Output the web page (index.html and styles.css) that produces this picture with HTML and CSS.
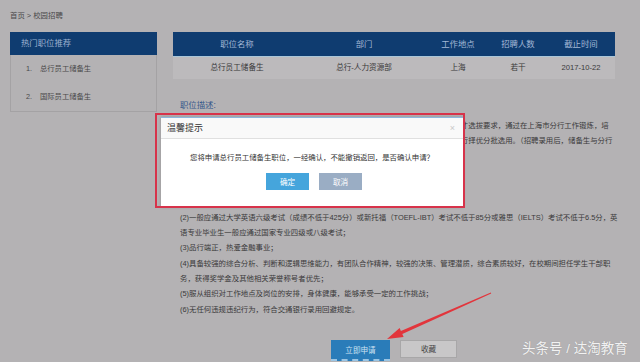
FILE: index.html
```html
<!DOCTYPE html>
<html lang="zh-CN">
<head>
<meta charset="utf-8">
<title>校园招聘</title>
<link rel="stylesheet" href="styles.css">
</head>
<body>
<div class="page">
  <div class="crumb">首页 &gt; 校园招聘</div>
  <div class="main">
    <aside class="side">
      <div class="side-hd">热门职位推荐</div>
      <ul class="side-list">
        <li><span class="num">1.</span>总行员工储备生</li>
        <li><span class="num">2.</span>国际员工储备生</li>
      </ul>
    </aside>
    <section class="content">
      <div class="table">
        <div class="thead">
          <span>职位名称</span><span>部门</span><span>工作地点</span><span>招聘人数</span><span>截止时间</span>
        </div>
        <div class="trow">
          <span>总行员工储备生</span><span>总行-人力资源部</span><span>上海</span><span>若干</span><span>2017-10-22</span>
        </div>
      </div>
      <div class="desc-title">职位描述:</div>
      <div class="desc">
        <p>交通银行总行员工储备生项目旨在为总行及境内外分行储备优秀青年人才，按照总行人才选拔要求，通过在上海市分行工作锻炼，培<br>养期满后经考核合格，由总行根据各部门业务发展需要及个人综合表现和意愿情况，进行择优分批选用。（招聘录用后，储备生与分行<br>签订劳动合同。）</p>
        <p>工作地点：上海</p>
        <p>任职资格：</p>
        <p>(1)2018年应届硕士及以上学历；</p>
        <p>(2)一般应通过大学英语六级考试（成绩不低于425分）或新托福（TOEFL-IBT）考试不低于85分或雅思（IELTS）考试不低于6.5分，英<br>语专业毕业生一般应通过国家专业四级或八级考试；</p>
        <p>(3)品行端正，热爱金融事业；</p>
        <p>(4)具备较强的综合分析、判断和逻辑思维能力，有团队合作精神，较强的决策、管理潜质，综合素质较好，在校期间担任学生干部职<br>务，获得奖学金及其他相关荣誉称号者优先；</p>
        <p>(5)服从组织对工作地点及岗位的安排，身体健康，能够承受一定的工作挑战；</p>
        <p>(6)无任何违规违纪行为，符合交通银行录用回避规定。</p>
      </div>
      <div class="actions">
        <button class="btn apply">立即申请</button>
        <button class="btn fav">收藏</button>
      </div>
    </section>
  </div>
</div>

<div class="dialog">
  <div class="dlg-hd">温馨提示<span class="dlg-close">×</span></div>
  <div class="dlg-msg">您将申请总行员工储备生职位，一经确认，不能撤销返回，是否确认申请？</div>
  <div class="dlg-btns">
    <button class="dbtn ok">确定</button>
    <button class="dbtn cancel">取消</button>
  </div>
</div>
<div class="hl-frame"></div>

<svg class="arrow" width="640" height="362" viewBox="0 0 640 362">
  <polygon points="491.2,293.5 402.3,334.1 403.6,337.1 387,339 399.6,327.9 400.9,330.9 490.8,292.5" fill="#e2353c"/>
</svg>

<div class="watermark">头条号 / 达淘教育</div>
</body>
</html>
```
FILE: styles.css
```css
html, body {
  margin: 0;
  padding: 0;
}
body {
  width: 640px;
  height: 362px;
  overflow: hidden;
  position: relative;
  background: #b4b2b4;
  font-family: "Liberation Sans", "Noto Sans CJK SC", sans-serif;
  color: #3a393a;
}
.page {
  padding: 10px 0 0 10px;
}
.crumb {
  height: 12px;
  line-height: 12px;
  font-size: 7.4px;
  color: #4a494a;
  margin-bottom: 10px;
}
.main {
  display: flex;
  align-items: flex-start;
  gap: 16px;
}
.side {
  width: 145px;
  border: 1px solid #a4a2a4;
  border-top: none;
}
.side-hd {
  margin: 0 -1px;
  height: 23px;
  line-height: 23px;
  padding-left: 11px;
  background: #0f3c70;
  color: #9db1cf;
  font-size: 8.4px;
}
.side-list {
  list-style: none;
  margin: 0;
  padding: 0;
}
.side-list li {
  height: 28px;
  line-height: 27px;
  padding-left: 15px;
  font-size: 7.3px;
  color: #4a494a;
}
.num {
  display: inline-block;
  width: 14px;
}
.content {
  width: 448px;
}
.table {
  width: 442px;
}
.thead, .trow {
  display: grid;
  grid-template-columns: 128px 126px 62px 58px 68px;
  text-align: center;
  white-space: nowrap;
}
.thead {
  height: 24px;
  line-height: 24px;
  background: #0f3c70;
  color: #a3b8d6;
  font-size: 8.4px;
  border-bottom: 1px solid #a9c6d8;
}
.trow {
  height: 22px;
  line-height: 22px;
  background: #bcbabc;
  font-size: 7.6px;
  color: #3a393a;
}
.desc-title {
  margin-top: 19px;
  padding-left: 7px;
  line-height: 15px;
  font-size: 8.4px;
  color: #35578a;
}
.desc {
  margin-top: 5px;
  padding-left: 7px;
  width: 452px;
  font-size: 7.4px;
  line-height: 15.3px;
  white-space: nowrap;
}
.desc p {
  margin: 0;
}
.actions {
  width: 442px;
  margin-top: 23px;
  display: flex;
  justify-content: center;
  align-items: flex-start;
  gap: 10px;
}
.btn {
  padding: 0;
  border: none;
  font-family: inherit;
  font-size: 7.6px;
  box-sizing: border-box;
}
.apply {
  width: 59px;
  height: 21px;
  background: #2a7cb9;
  color: #cfe2f2;
  border-bottom: 2px dashed #9cc5e3;
}
.fav {
  width: 57px;
  height: 18px;
  background: #c8c7c8;
  border: 1px solid #a8a7a8;
  color: #444;
}
.dialog {
  position: absolute;
  left: 161px;
  top: 117px;
  width: 302px;
  height: 90px;
  background: #fff;
  box-shadow: 0 0 3px rgba(0, 0, 0, 0.2);
}
.dlg-hd {
  position: relative;
  height: 20px;
  line-height: 20px;
  padding-left: 6px;
  border-top: 1px solid #8cb7de;
  border-bottom: 1px solid #e0e0e0;
  background: #f9f9f9;
  font-size: 9px;
  color: #333;
}
.dlg-close {
  position: absolute;
  right: 8px;
  top: 0;
  color: #c8c8c8;
  font-size: 9px;
}
.dlg-msg {
  margin-top: 13px;
  text-align: center;
  font-size: 7.4px;
  line-height: 11px;
  color: #333;
}
.dlg-btns {
  margin-top: 10px;
  padding-left: 4px;
  display: flex;
  justify-content: center;
  gap: 10px;
}
.dbtn {
  width: 43px;
  height: 17px;
  padding: 0;
  border: none;
  font-family: inherit;
  font-size: 7.6px;
  color: #fff;
}
.ok {
  background: #45a5dc;
}
.cancel {
  background: #9aadc4;
}
.hl-frame {
  position: absolute;
  left: 155px;
  top: 113px;
  width: 306px;
  height: 91px;
  border: 2px solid #d7334a;
}
.arrow {
  position: absolute;
  left: 0;
  top: 0;
  pointer-events: none;
}
.watermark {
  position: absolute;
  left: 522px;
  top: 340px;
  line-height: 18px;
  font-size: 13.5px;
  color: #f2f2f2;
  text-shadow: 0 0 1px rgba(0, 0, 0, 0.2);
  white-space: nowrap;
}
```
